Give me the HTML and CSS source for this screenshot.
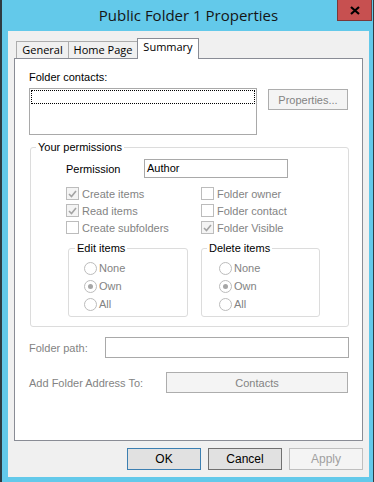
FILE: index.html
```html
<!DOCTYPE html>
<html lang="en">
<head>
    <meta charset="UTF-8">
    <meta name="viewport" content="width=device-width, initial-scale=1.0">
    <title>Public Folder 1 Properties</title>
    <link rel="stylesheet" href="styles.css">
</head>
<body>
    <div class="window">
        <div class="titlebar">
            <span class="title">Public Folder 1 Properties</span>
            <span class="close">
                <svg width="10" height="9" viewBox="0 0 10 9">
                    <path d="M1 1 L9 8 M9 1 L1 8" stroke="#000" stroke-width="2.2" fill="none"/>
                </svg>
            </span>
        </div>

        <div class="client">
            <div class="tabs">
                <div class="tab tab-general">General</div>
                <div class="tab tab-home">Home Page</div>
                <div class="tab tab-summary active">Summary</div>
            </div>

            <div class="panel">
                <div class="label">Folder contacts:</div>
                <div class="contacts-row">
                    <div class="listbox"><div class="focus-row"></div></div>
                    <button class="btn btn-props" disabled>Properties...</button>
                </div>

                <fieldset class="group perms">
                    <legend>Your permissions</legend>
                    <div class="perms-body">
                        <div class="perm-row">
                            <span class="perm-label">Permission</span>
                            <span class="textbox perm-box">Author</span>
                        </div>

                        <div class="checks">
                            <div class="check"><span class="box checked"><svg width="9" height="8" viewBox="0 0 9 8"><path d="M1 4 L3.5 6.5 L8 1" stroke="#a3a3a3" stroke-width="1.6" fill="none"/></svg></span>Create items</div>
                            <div class="check"><span class="box"></span>Folder owner</div>
                            <div class="check"><span class="box checked"><svg width="9" height="8" viewBox="0 0 9 8"><path d="M1 4 L3.5 6.5 L8 1" stroke="#a3a3a3" stroke-width="1.6" fill="none"/></svg></span>Read items</div>
                            <div class="check"><span class="box"></span>Folder contact</div>
                            <div class="check"><span class="box"></span>Create subfolders</div>
                            <div class="check"><span class="box checked"><svg width="9" height="8" viewBox="0 0 9 8"><path d="M1 4 L3.5 6.5 L8 1" stroke="#a3a3a3" stroke-width="1.6" fill="none"/></svg></span>Folder Visible</div>
                        </div>

                        <div class="subgroups">
                            <fieldset class="group sub sub-edit">
                                <legend>Edit items</legend>
                                <div class="sub-body">
                                    <div class="radio"><span class="circle"></span>None</div>
                                    <div class="radio"><span class="circle on"></span>Own</div>
                                    <div class="radio"><span class="circle"></span>All</div>
                                </div>
                            </fieldset>
                            <fieldset class="group sub sub-delete">
                                <legend>Delete items</legend>
                                <div class="sub-body">
                                    <div class="radio"><span class="circle"></span>None</div>
                                    <div class="radio"><span class="circle on"></span>Own</div>
                                    <div class="radio"><span class="circle"></span>All</div>
                                </div>
                            </fieldset>
                        </div>
                    </div>
                </fieldset>

                <div class="field-row path-row">
                    <span class="field-label">Folder path:</span>
                    <span class="textbox path-box"></span>
                </div>
                <div class="field-row addr-row">
                    <span class="field-label">Add Folder Address To:</span>
                    <button class="btn btn-contacts" disabled>Contacts</button>
                </div>
            </div>

            <div class="footer">
                <button class="btn btn-ok">OK</button>
                <button class="btn btn-cancel">Cancel</button>
                <button class="btn btn-apply" disabled>Apply</button>
            </div>
        </div>
    </div>
</body>
</html>
```

FILE: styles.css
```css
body {
    margin: 0;
    font-family: "Liberation Sans", Arial, sans-serif;
    font-size: 11px;
    color: #000;
}

.window {
    width: 374px;
    height: 482px;
    box-sizing: border-box;
    background-color: #63c9ea;
    border-left: 2px solid #2e3b42;
    border-right: 1px solid #2e3b42;
    display: flex;
    flex-direction: column;
}

.titlebar {
    height: 31px;
    flex: none;
    position: relative;
}

.title {
    display: block;
    text-align: center;
    padding-left: 2px;
    font-family: "Open Sans", sans-serif;
    font-size: 15px;
    line-height: 30px;
    color: #151515;
}

.close {
    position: absolute;
    top: 0;
    right: 1px;
    width: 35px;
    height: 21px;
    box-sizing: border-box;
    background-color: #c75050;
    border: 1px solid #7a3838;
    border-top: none;
    display: flex;
    align-items: center;
    justify-content: center;
}

.client {
    flex: 1;
    min-height: 0;
    margin: 0 4px 5px 6px;
    padding: 7px 6px 7px 6px;
    background-color: #f0f0f0;
    display: flex;
    flex-direction: column;
}

/* tabs */
.tabs {
    display: flex;
    align-items: flex-end;
    height: 20px;
    flex: none;
    padding-left: 2px;
}

.tab {
    box-sizing: border-box;
    height: 17px;
    margin-right: -1px;
    border: 1px solid #acacac;
    border-bottom: none;
    background-color: #f0f0f0;
    font-family: "Open Sans", sans-serif;
    font-size: 11px;
    line-height: 15px;
    text-align: center;
}

.tab-general { width: 53px; }
.tab-home { width: 70px; }
.tab-summary { width: 62px; }

.tab.active {
    height: 21px;
    margin-bottom: -1px;
    background-color: #fff;
    border-color: #898c95;
    position: relative;
    z-index: 1;
}

.panel {
    flex: 1;
    background-color: #fff;
    border: 1px solid #898c95;
    padding: 12px 0 0 14px;
}

.label {
    line-height: 13px;
}

.contacts-row {
    display: flex;
    align-items: flex-start;
    margin-top: 4px;
}

.listbox {
    width: 228px;
    height: 47px;
    box-sizing: border-box;
    border: 1px solid #a9a9a9;
    padding: 1px;
}

.focus-row {
    height: 14px;
    box-sizing: border-box;
    border: 1px dotted #000;
}

/* buttons */
.btn {
    box-sizing: border-box;
    padding: 0;
    font-family: "Liberation Sans", Arial, sans-serif;
    font-size: 11px;
    color: #000;
    background-color: #e1e1e1;
    border: 1px solid #adadad;
}

.btn:disabled {
    color: #838383;
    background-color: #f4f4f4;
    border-color: #adadad;
}

.btn-props {
    width: 80px;
    height: 21px;
    margin: 1px 0 0 11px;
}

/* group boxes */
.group {
    margin: 0;
    padding: 0;
    min-width: 0;
    box-sizing: border-box;
    border: 1px solid #dcdcdc;
    border-radius: 3px;
}

.group legend {
    padding: 0 2px;
    line-height: 13px;
}

.perms {
    width: 319px;
    margin: 6px 0 0 1px;
}

.perms legend {
    margin-left: 5px;
}

.perms-body {
    padding: 0 0 9px 35px;
}

.perm-row {
    display: flex;
    align-items: center;
    height: 19px;
    margin-top: 5px;
}

.perm-label {
    width: 78px;
}

.textbox {
    box-sizing: border-box;
    height: 19px;
    line-height: 17px;
    padding-left: 2px;
    background-color: #fff;
    border: 1px solid #a9a9a9;
}

.perm-box {
    width: 144px;
}

.checks {
    display: grid;
    grid-template-columns: 135px 1fr;
    grid-auto-rows: 17px;
    margin-top: 7px;
}

.check {
    display: flex;
    align-items: center;
    color: #838383;
}

.box {
    width: 13px;
    height: 13px;
    box-sizing: border-box;
    margin-right: 3px;
    border: 1px solid #bcbcbc;
    background-color: #fff;
    display: flex;
    align-items: center;
    justify-content: center;
}

.box.checked {
    background-color: #f4f4f4;
}

.subgroups {
    display: flex;
    gap: 13px;
    margin: 6px 0 0 2px;
}

.sub-edit { width: 120px; }
.sub-delete { width: 119px; }

.sub-edit legend { margin-left: 6px; }
.sub-delete legend { margin-left: 5px; }

.sub-body {
    padding: 4px 0 3px 15px;
}

.sub-delete .sub-body {
    padding-left: 17px;
}

.radio {
    display: flex;
    align-items: center;
    height: 18px;
    color: #838383;
}

.circle {
    width: 13px;
    height: 13px;
    box-sizing: border-box;
    margin-right: 2px;
    border: 1px solid #bcbcbc;
    border-radius: 50%;
    background-color: #fff;
    display: flex;
    align-items: center;
    justify-content: center;
}

.circle.on::after {
    content: "";
    width: 5px;
    height: 5px;
    border-radius: 50%;
    background-color: #a6a6a6;
}

/* bottom fields */
.field-row {
    display: flex;
    align-items: center;
    height: 21px;
    color: #838383;
}

.path-row { margin-top: 10px; }
.addr-row { margin-top: 14px; }

.path-row .field-label { width: 76px; }
.addr-row .field-label { width: 137px; }

.path-box {
    width: 244px;
    height: 21px;
}

.btn-contacts {
    width: 182px;
    height: 21px;
    background-color: #f0f0f0;
}

.footer {
    flex: none;
    display: flex;
    justify-content: flex-end;
    gap: 7px;
    margin-top: 7px;
}

.footer .btn {
    width: 74px;
    height: 22px;
    font-size: 12px;
}

.btn-ok {
    border-color: #3c7fb1;
}

.btn-cancel {
    border-color: #707070;
}

.footer .btn-apply {
    color: #a0a0a0;
    background-color: #f4f4f4;
    border-color: #bfbfbf;
}
```
